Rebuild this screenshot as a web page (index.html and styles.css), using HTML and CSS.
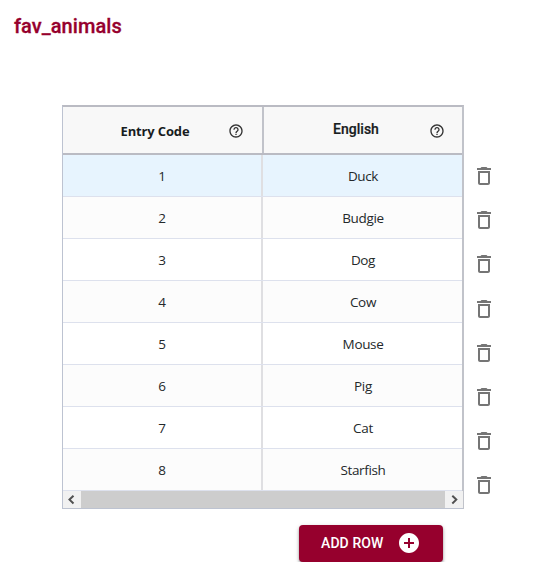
FILE: index.html
```
<!DOCTYPE html>
<html lang="en">
<head>
<meta charset="utf-8">
<title>fav_animals</title>
<link rel="stylesheet" href="styles.css">
</head>
<body>
<svg class="defs" width="0" height="0" aria-hidden="true">
  <symbol id="help" viewBox="0 0 24 24"><path d="M11 18h2v-2h-2v2zm1-16C6.480 2 2 6.480 2 12s4.480 10 10 10 10-4.480 10-10S17.520 2 12 2zm0 18c-4.410 0-8-3.590-8-8s3.590-8 8-8 8 3.590 8 8-3.590 8-8 8zm0-14c-2.210 0-4 1.790-4 4h2c0-1.100.9-2 2-2s2 .9 2 2c0 2-3 1.750-3 5h2c0-2.250 3-2.500 3-5 0-2.210-1.790-4-4-4z"/></symbol>
  <symbol id="trash" viewBox="0 0 24 24"><path d="M6 19c0 1.100.9 2 2 2h8c1.100 0 2-.9 2-2V7H6v12zM8 9h8v10H8V9zm7.500-5l-1-1h-5l-1 1H5v2h14V4h-3.500z"/></symbol>
</svg>
<h1 class="title">fav_animals</h1>
<main class="content">
  <div class="grid">
    <div class="head">
      <div class="head-cell code">Entry Code<svg class="help"><use href="#help"/></svg></div>
      <div class="head-cell lang">English<svg class="help"><use href="#help"/></svg></div>
    </div>
    <div class="row selected"><span class="cell">1</span><span class="cell">Duck</span></div>
    <div class="row"><span class="cell">2</span><span class="cell">Budgie</span></div>
    <div class="row"><span class="cell">3</span><span class="cell">Dog</span></div>
    <div class="row"><span class="cell">4</span><span class="cell">Cow</span></div>
    <div class="row"><span class="cell">5</span><span class="cell">Mouse</span></div>
    <div class="row"><span class="cell">6</span><span class="cell">Pig</span></div>
    <div class="row"><span class="cell">7</span><span class="cell">Cat</span></div>
    <div class="row"><span class="cell">8</span><span class="cell">Starfish</span></div>
    <div class="scroll">
      <svg class="arrow" viewBox="0 0 18 17"><path d="M10.500 4.800L6.500 8.600l4 3.800"/></svg>
      <div class="thumb"></div>
      <svg class="arrow" viewBox="0 0 18 17"><path d="M7.300 4.800l4 3.800-4 3.800"/></svg>
    </div>
  </div>
  <div class="actions">
    <svg class="trash"><use href="#trash"/></svg>
    <svg class="trash"><use href="#trash"/></svg>
    <svg class="trash"><use href="#trash"/></svg>
    <svg class="trash"><use href="#trash"/></svg>
    <svg class="trash"><use href="#trash"/></svg>
    <svg class="trash"><use href="#trash"/></svg>
    <svg class="trash"><use href="#trash"/></svg>
    <svg class="trash"><use href="#trash"/></svg>
  </div>
</main>
<button class="add">ADD ROW
  <svg class="plus" viewBox="0 0 24 24"><path d="M12 2C6.480 2 2 6.480 2 12s4.480 10 10 10 10-4.480 10-10S17.520 2 12 2zm5 11h-4v4h-2v-4H7v-2h4V7h2v4h4v2z"/></svg>
</button>
</body>
</html>
```
FILE: styles.css
```
* { box-sizing: border-box; }
body { margin: 0; background: #fff; font-family: "Open Sans", "Noto Sans", sans-serif; overflow: hidden; }
.defs { display: none; }
.title { margin: 0; padding: 14px 0 0 14px; height: 105px; font: 500 20px/24px Roboto, sans-serif; letter-spacing: .05px; color: #96002d; -webkit-text-stroke: .3px #96002d; }
.content { display: flex; padding-left: 62px; }
.grid { width: 402px; height: 404px; border: 1px solid #bdc3d1; border-top: 2px solid #babbc3; border-right: 2px solid #c1c3ca; }
.head { display: flex; height: 48px; background: #f8f8f8; border-bottom: 2px solid #babbc3; }
.head-cell { display: grid; grid-template-columns: 1fr 16px; align-items: center; text-align: center; font-size: 13px; font-weight: 700; color: #181d1f; }
.code { width: 201px; padding: 2px 18px 0 19px; border-right: 2px solid #c1c3ca; letter-spacing: -.15px; }
.lang { width: 198px; padding: 0 17px 2px 19px; font: 500 14px Roboto, sans-serif; -webkit-text-stroke: .2px #181d1f; }
.help { width: 16px; height: 16px; fill: #333; }
.code .help { margin-top: -1px; }
.lang .help { margin-top: 3px; }
.row { display: flex; height: 42px; border-bottom: 1px solid #dde1ed; }
.row:nth-child(even) { background: #fff; }
.row:nth-child(odd) { background: #fcfcfc; }
.row.selected { background: #e7f4fe; }
.cell { width: 200px; height: 41px; line-height: 43px; font-size: 13.500px; letter-spacing: -.35px; text-align: center; color: #24292b; border-right: 2px solid #dfdfe2; }
.cell:last-child { width: 199px; border-right: 0; padding-left: 1px; }
.scroll { display: flex; width: 400px; height: 17px; background: #f1f1f1; }
.arrow { width: 18px; height: 17px; fill: none; stroke: #505050; stroke-width: 2; }
.thumb { flex: 1; margin-right: -1px; background: #cdcdcd; }
.scroll .arrow:last-child { margin-left: 1px; background: #f1f1f1; }
.actions { display: flex; flex-direction: column; gap: 20.200px; padding: 59px 0 0 8px; }
.trash { width: 24px; height: 24px; fill: #757575; }
.add { display: flex; align-items: center; justify-content: space-between; width: 144px; height: 37px; margin: 16px 0 0 298.500px; padding: 0 22px 1px 22.500px; border: 0; border-radius: 4px; background: #96002d; color: #fff; font: 500 14px Roboto, sans-serif; letter-spacing: .1px; box-shadow: 0 2px 3px rgba(0,0,0,.35), 0 1px 5px rgba(0,0,0,.12); }
.plus { width: 24px; height: 24px; fill: #fff; }
```
